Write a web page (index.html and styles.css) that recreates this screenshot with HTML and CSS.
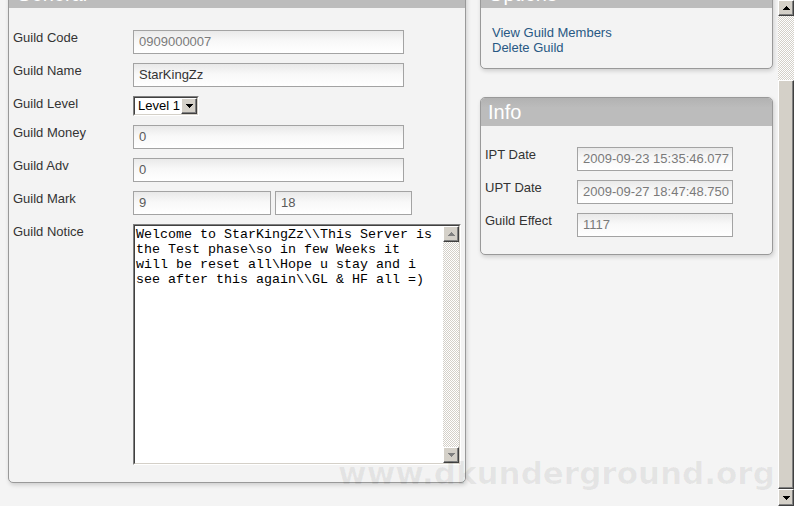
FILE: index.html
```html
<!DOCTYPE html>
<html>
<head>
<meta charset="utf-8">
<link rel="stylesheet" href="styles.css">
</head>
<body>
<div class="page">
  <div class="content">
    <section class="panel general">
      <div class="panel-head">General</div>
      <div class="panel-body">
        <div class="row"><div class="label">Guild Code</div><div class="field w271 ro">0909000007</div></div>
        <div class="row"><div class="label">Guild Name</div><div class="field w271 dark">StarKingZz</div></div>
        <div class="row">
          <div class="label">Guild Level</div>
          <div class="select">
            <div class="select-in">
              <span class="select-val">Level 1</span>
              <span class="btn3d sel-btn"><svg width="7" height="4" viewBox="0 0 7 4" shape-rendering="crispEdges"><path d="M0 0H7L3.5 4Z" fill="#000"/></svg></span>
            </div>
          </div>
        </div>
        <div class="row"><div class="label">Guild Money</div><div class="field w271">0</div></div>
        <div class="row"><div class="label">Guild Adv</div><div class="field w271">0</div></div>
        <div class="row mark"><div class="label">Guild Mark</div><div class="field w138">9</div><div class="field w137">18</div></div>
        <div class="row">
          <div class="label">Guild Notice</div>
          <div class="notice">
            <div class="notice-in">
              <div class="notice-text">Welcome to StarKingZz\\This Server is the Test phase\so in few Weeks it will be reset all\Hope u stay and i see after this again\\GL &amp; HF all =)</div>
              <div class="tscroll">
                <span class="btn3d tbtn"><svg width="7" height="4" viewBox="0 0 7 4" shape-rendering="crispEdges"><path d="M3.5 0L7 4H0Z" fill="#808080"/></svg></span>
                <span class="checker grow"></span>
                <span class="btn3d tbtn"><svg width="7" height="4" viewBox="0 0 7 4" shape-rendering="crispEdges"><path d="M0 0H7L3.5 4Z" fill="#808080"/></svg></span>
              </div>
            </div>
          </div>
        </div>
      </div>
    </section>
    <div class="side">
      <section class="panel options">
        <div class="panel-head">Options</div>
        <div class="panel-body links">
          <a class="link" href="#">View Guild Members</a>
          <a class="link" href="#">Delete Guild</a>
        </div>
      </section>
      <section class="panel info">
        <div class="panel-head">Info</div>
        <div class="panel-body">
          <div class="row"><div class="label">IPT Date</div><div class="field w156 ro">2009-09-23 15:35:46.077</div></div>
          <div class="row"><div class="label">UPT Date</div><div class="field w156 ro">2009-09-27 18:47:48.750</div></div>
          <div class="row"><div class="label">Guild Effect</div><div class="field w156 ro">1117</div></div>
        </div>
      </section>
    </div>
  </div>
  <div class="vscroll">
    <span class="btn3d sbtn"><svg width="7" height="4" viewBox="0 0 7 4" shape-rendering="crispEdges"><path d="M3.5 0L7 4H0Z" fill="#000"/></svg></span>
    <span class="checker track"></span>
    <span class="btn3d thumb"></span>
    <span class="btn3d sbtn down"><svg width="7" height="4" viewBox="0 0 7 4" shape-rendering="crispEdges"><path d="M0 0H7L3.5 4Z" fill="#000"/></svg></span>
  </div>
</div>
<div class="watermark">www.dkunderground.org</div>
</body>
</html>
```
FILE: styles.css
```css
* { box-sizing: border-box; }
html, body { margin: 0; height: 100%; overflow: hidden; }
body {
  background: #f4f4f4;
  font-family: "Liberation Sans", Arial, sans-serif;
  font-size: 13px;
  color: #333;
  position: relative;
}
.page { display: flex; height: 506px; }
.content {
  flex: 1;
  display: flex;
  align-items: flex-start;
  gap: 14px;
  padding-left: 8px;
  margin-top: -21px;
}
.panel {
  background: #f3f3f3;
  border: 1px solid #999;
  border-radius: 5px;
  box-shadow: 1px 2px 4px rgba(0,0,0,0.16);
  overflow: hidden;
}
.panel-head {
  height: 28px;
  background: linear-gradient(#b2b2b2, #bcbcbc 35%, #bcbcbc);
  color: #fff;
  font-size: 20px;
  line-height: 28px;
  padding-left: 7px;
}
.general { width: 458px; }
.general .panel-body { padding: 22px 4px 17px; }
.side { width: 293px; display: flex; flex-direction: column; gap: 28px; }
.links { padding: 17px 11px 13px; display: flex; flex-direction: column; }
.link { color: #285883; text-decoration: none; line-height: 15px; }
.info .panel-body { padding: 21px 4px 17px; }

.row { display: flex; align-items: flex-start; margin-bottom: 9px; }
.row:last-child { margin-bottom: 0; }
.mark { gap: 4px; }
.label { width: 120px; flex: none; line-height: 16px; }
.mark .label { margin-right: -4px; }
.info .label { width: 92px; }

.field {
  height: 24px;
  border: 1px solid #a3a3a3;
  background: linear-gradient(#e9e9e9, #f8f8f8 45%, #fff);
  padding: 0 5px;
  line-height: 22px;
  color: #5a5a5a;
  white-space: nowrap;
  overflow: hidden;
}
.field.ro { color: #7a7a7a; }
.field.dark { color: #333; }
.w271 { width: 271px; }
.w138 { width: 138px; }
.w137 { width: 137px; }
.w156 { width: 156px; }

.btn3d {
  background: #d4d0c8;
  border: 1px solid;
  border-color: #fff #404040 #404040 #fff;
  box-shadow: inset -1px -1px #808080;
  display: flex;
  align-items: center;
  justify-content: center;
}

.select {
  width: 66px;
  height: 20px;
  border: 1px solid;
  border-color: #808080 #fff #fff #808080;
}
.select-in {
  height: 100%;
  display: flex;
  border: 1px solid;
  border-color: #404040 #d4d0c8 #d4d0c8 #404040;
  background: #fff;
}
.select-val { flex: 1; color: #000; line-height: 16px; padding-left: 3px; }
.sel-btn { width: 16px; height: 16px; }

.notice {
  width: 328px;
  height: 241px;
  border: 1px solid;
  border-color: #808080 #fff #fff #808080;
}
.notice-in {
  height: 100%;
  display: flex;
  border: 1px solid;
  border-color: #404040 #d4d0c8 #d4d0c8 #404040;
  background: #fff;
}
.notice-text {
  flex: 1;
  padding: 1px 10px 1px 1px;
  font-family: "Liberation Mono", "Courier New", monospace;
  font-size: 13.333px;
  line-height: 15px;
  color: #000;
}
.tscroll { width: 16px; display: flex; flex-direction: column; }
.tbtn { height: 16px; flex: none; }
.grow { flex: 1; }
.checker {
  background: repeating-conic-gradient(#d4d0c8 0 25%, #fff 0 50%) 0 0 / 2px 2px;
}

.vscroll { width: 16px; flex: none; display: flex; flex-direction: column; height: 506px; }
.sbtn { height: 16px; flex: none; }
.sbtn.down { height: 17px; }
.track { height: 64px; flex: none; }
.thumb { flex: 1; }

.watermark {
  position: absolute;
  left: 338px;
  top: 458px;
  font-family: "DejaVu Sans", Verdana, sans-serif;
  font-weight: bold;
  font-size: 31px;
  line-height: 31px;
  color: rgba(0,0,0,0.06);
  white-space: nowrap;
  pointer-events: none;
}
```
